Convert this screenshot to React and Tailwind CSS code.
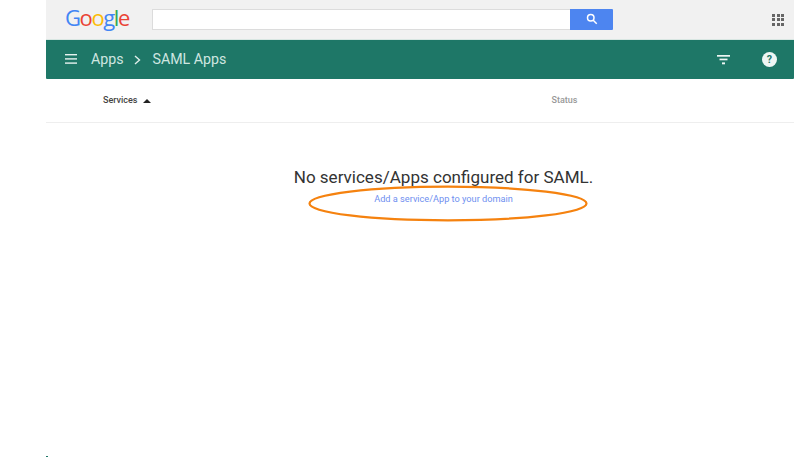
import React from "react";

function Logo() {
  return (
    <div className="w-[65px] ml-[20px] flex font-['Open_Sans',sans-serif] text-[22px] leading-[24px] tracking-[-1.4px] font-medium mt-[-5px] -translate-x-[1px]">
      <span className="text-[#4285f4]">G</span>
      <span className="text-[#ea4335]">o</span>
      <span className="text-[#fbbc05]">o</span>
      <span className="text-[#4285f4]">g</span>
      <span className="text-[#34a853]">l</span>
      <span className="text-[#ea4335]">e</span>
    </div>
  );
}

function Grid() {
  return (
    <div className="grid grid-cols-3 gap-[1.5px] w-[12px] h-[12px]">
      {Array.from({ length: 9 }).map((_, i) => (
        <div key={i} className="bg-[#666666] w-[3px] h-[3px]" />
      ))}
    </div>
  );
}

export default function App() {
  return (
    <div className="w-[794px] h-[457px] bg-white relative overflow-hidden flex flex-col pl-[46px] font-['Roboto',sans-serif]">
      <div className="h-[39px] bg-[#f1f1f1] flex items-center shrink-0">
        <Logo />
        <div className="ml-[21px] w-[418px] h-[21px] bg-white border border-[#dcdcdc] border-r-0 mt-[-1px]" />
        <div className="w-[43px] h-[21px] bg-[#4d85f0] rounded-r-[1px] flex items-center justify-center mt-[-1px]">
          <svg width="12" height="12" viewBox="0 0 24 24" fill="none" stroke="white" strokeWidth="3">
            <circle cx="9.5" cy="9.5" r="6.5" />
            <path d="M14.5 14.5 L21.5 21.5" />
          </svg>
        </div>
        <div className="ml-auto mr-[10px]">
          <Grid />
        </div>
      </div>
      <div className="h-[40px] bg-[#1e7767] border-t border-[#d8e6e2] border-b-[#2a6e62] flex items-center shrink-0 rounded-b-[1px]">
        <svg className="ml-[19px] mt-[-1px]" width="12" height="10" viewBox="0 0 12 10" fill="#e6f2ef">
          <rect x="0" y="0" width="12" height="1.4" />
          <rect x="0" y="4.2" width="12" height="1.4" />
          <rect x="0" y="8.4" width="12" height="1.4" />
        </svg>
        <span className="ml-[14px] mt-[0px] text-[14.2px] leading-none text-[#cfe6e0]">Apps</span>
        <svg className="ml-[10px]" width="7" height="10" viewBox="0 0 7 10" fill="none" stroke="#e0efeb" strokeWidth="1.4">
          <path d="M1 1 L5.5 5 L1 9" />
        </svg>
        <span className="ml-[12px] mt-[0px] text-[14.2px] leading-none text-[#cfe6e0]">SAML Apps</span>
        <svg className="ml-auto" width="14" height="10" viewBox="0 0 14 10" fill="#eef6f4">
          <rect x="0" y="0" width="13" height="1.7" />
          <rect x="2.5" y="3.6" width="8" height="1.7" />
          <rect x="5" y="7.4" width="3" height="1.9" />
        </svg>
        <svg className="ml-[31px] mr-[17px]" width="15" height="15" viewBox="0 0 24 24">
          <circle cx="12" cy="12" r="12" fill="#eef6f4" />
          <text x="12" y="18" textAnchor="middle" fontSize="17" fontWeight="700" fontFamily="Roboto, sans-serif" fill="#1e7767">?</text>
        </svg>
      </div>
      <div className="h-[44px] border-b border-[#eeeeee] flex items-center shrink-0 text-[9px]">
        <span className="ml-[57px] text-[#444444] font-medium">Services</span>
        <svg className="ml-[6px]" width="8" height="4" viewBox="0 0 8 4" fill="#222222">
          <path d="M0 4 L4 0 L8 4 Z" />
        </svg>
        <span className="ml-[400px] text-[#999999] font-medium">Status</span>
      </div>
      <div className="flex flex-col items-center pt-[44px] pl-[47px]">
        <h2 className="text-[17.05px] leading-[21px] text-[#333333] font-normal">No services/Apps configured for SAML.</h2>
        <a className="text-[9.2px] leading-[12px] mt-[5px] text-[#6f8ff0]">Add a service/App to your domain</a>
      </div>
      <svg className="absolute left-[308px] top-[185px]" width="280" height="37" viewBox="0 0 280 37" fill="none">
        <ellipse cx="140" cy="18.5" rx="138.5" ry="16.8" stroke="#f5820f" strokeWidth="2.2" />
      </svg>
      <div className="absolute left-[46px] top-[456px] w-[2px] h-[1px] bg-[#1e7767]" />
    </div>
  );
}
